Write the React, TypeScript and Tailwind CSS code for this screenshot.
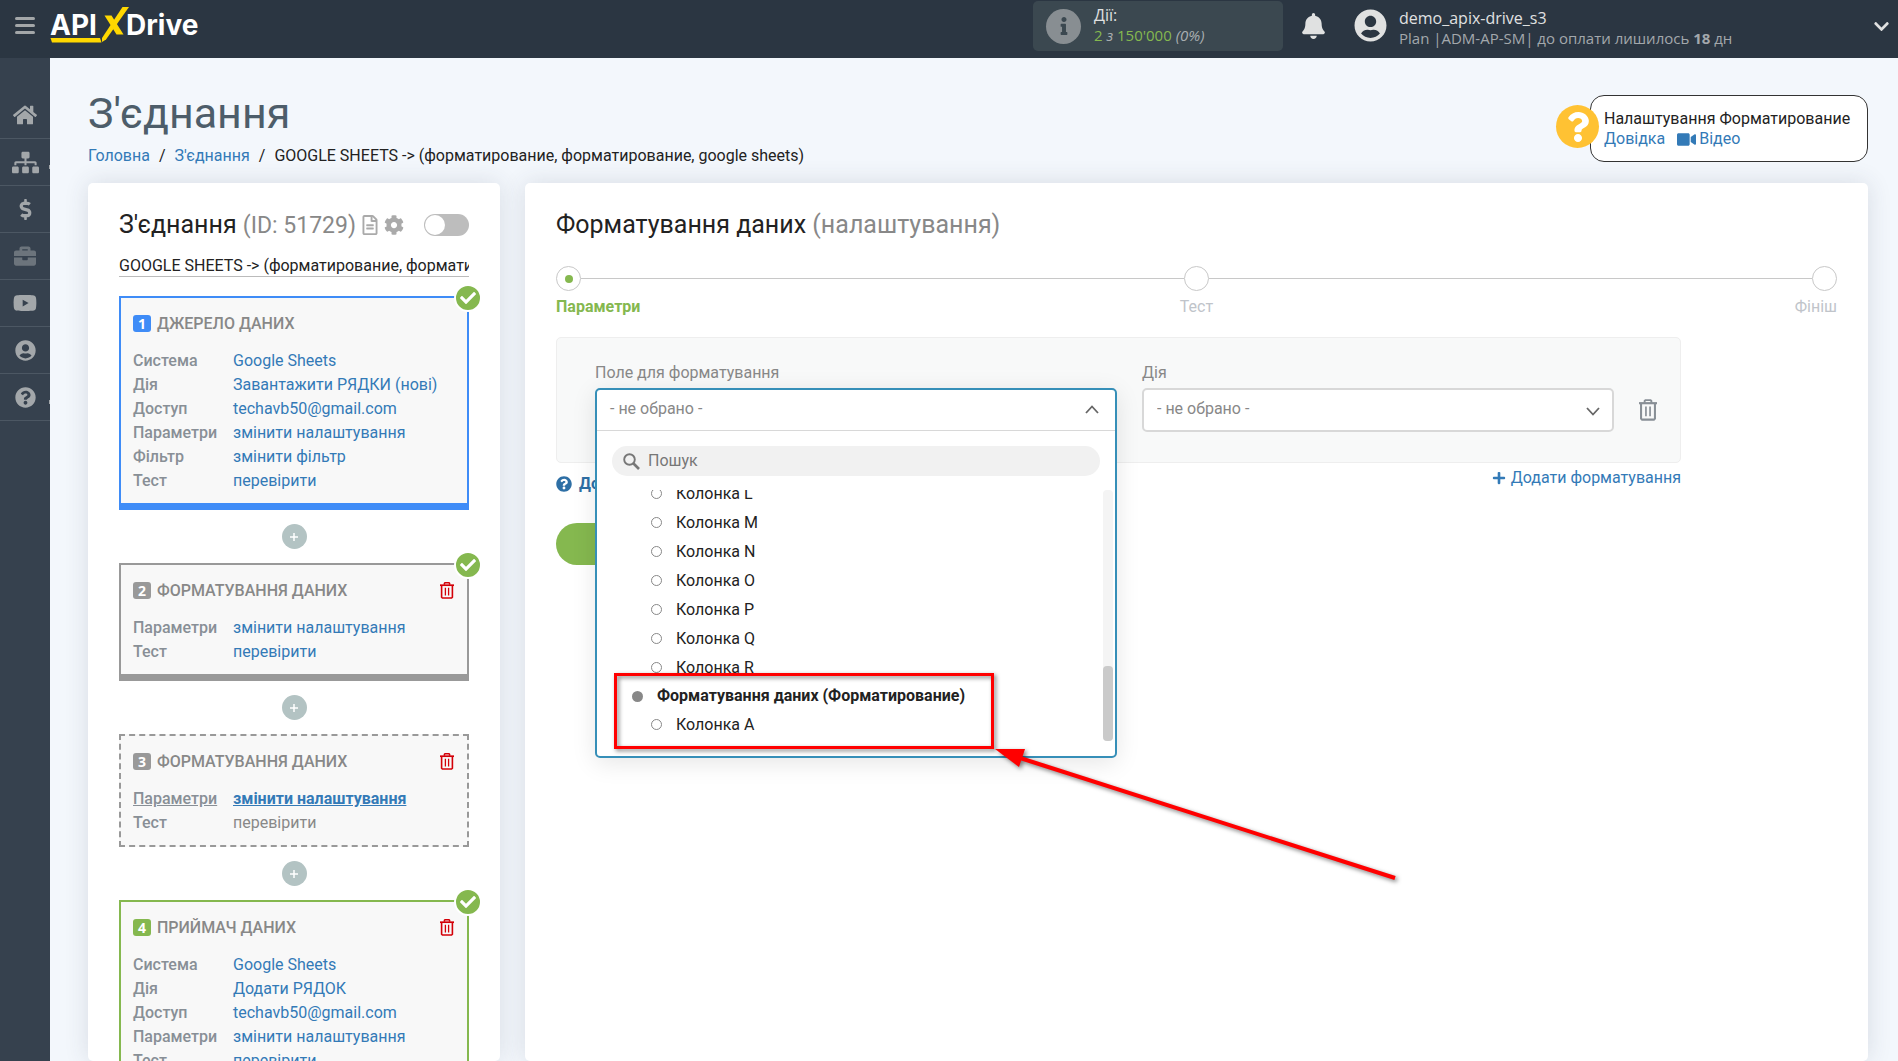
import React from "react";
import {
  FaBell,
  FaBriefcase,
  FaCheck,
  FaChevronDown,
  FaCog,
  FaDollarSign,
  FaHome,
  FaPlus,
  FaQuestion,
  FaQuestionCircle,
  FaRegFileAlt,
  FaSitemap,
  FaUserCircle,
  FaVideo,
  FaYoutube,
  FaInfo,
} from "react-icons/fa";

type Row = { label: string; value: string; state?: "active" | "muted" };

type Step = {
  number: number;
  title: string;
  box: string;
  badge: string;
  done: boolean;
  removable: boolean;
  rows: Row[];
};

const steps: Step[] = [
  {
    number: 1,
    title: "ДЖЕРЕЛО ДАНИХ",
    box: "border-2 border-b-[7px] border-[#3f8cf7]",
    badge: "bg-[#3f8cf7]",
    done: true,
    removable: false,
    rows: [
      { label: "Система", value: "Google Sheets" },
      { label: "Дія", value: "Завантажити РЯДКИ (нові)" },
      { label: "Доступ", value: "techavb50@gmail.com" },
      { label: "Параметри", value: "змінити налаштування" },
      { label: "Фільтр", value: "змінити фільтр" },
      { label: "Тест", value: "перевірити" },
    ],
  },
  {
    number: 2,
    title: "ФОРМАТУВАННЯ ДАНИХ",
    box: "border-2 border-b-[7px] border-[#999]",
    badge: "bg-[#999]",
    done: true,
    removable: true,
    rows: [
      { label: "Параметри", value: "змінити налаштування" },
      { label: "Тест", value: "перевірити" },
    ],
  },
  {
    number: 3,
    title: "ФОРМАТУВАННЯ ДАНИХ",
    box: "border-2 border-dashed border-[#999]",
    badge: "bg-[#999]",
    done: false,
    removable: true,
    rows: [
      { label: "Параметри", value: "змінити налаштування", state: "active" },
      { label: "Тест", value: "перевірити", state: "muted" },
    ],
  },
  {
    number: 4,
    title: "ПРИЙМАЧ ДАНИХ",
    box: "border-2 border-b-[7px] border-[#85b84f]",
    badge: "bg-[#85b84f]",
    done: true,
    removable: true,
    rows: [
      { label: "Система", value: "Google Sheets" },
      { label: "Дія", value: "Додати РЯДОК" },
      { label: "Доступ", value: "techavb50@gmail.com" },
      { label: "Параметри", value: "змінити налаштування" },
      { label: "Тест", value: "перевірити" },
    ],
  },
];

const columns = ["L", "M", "N", "O", "P", "Q", "R"];

const menu = [
  { name: "Головна", icon: <FaHome className="size-6" /> },
  { name: "З'єднання", icon: <FaSitemap className="size-[27px]" />, sub: true },
  { name: "Оплата", icon: <FaDollarSign className="size-[21px]" /> },
  { name: "Проєкти", icon: <FaBriefcase className="size-[22px] opacity-50" /> },
  { name: "Відео", icon: <FaYoutube className="size-6" /> },
  { name: "Профіль", icon: <FaUserCircle className="size-[21px]" /> },
  { name: "Допомога", icon: <FaQuestionCircle className="size-[21px]" />, sub: true },
];

function Trash({ className }: { className: string }) {
  return (
    <svg viewBox="0 0 14 17" className={className} fill="none" stroke="currentColor" aria-hidden="true">
      <path d="M0 3.2h14" strokeWidth="1.7" />
      <path d="M4.4 2.8V1.4l.6-.6h4l.6.6v1.4" strokeWidth="1.5" />
      <path d="M1.6 3.5v11.7l.8.8h9.2l.8-.8V3.5" strokeWidth="1.6" />
      <path d="M5.4 5.8v7.6M8.6 5.8v7.6" strokeWidth="1.3" />
    </svg>
  );
}

function Logo() {
  return (
    <a href="#" aria-label="APIXDrive" className="block">
      <svg viewBox="0 0 154 38" className="h-[38px] w-[154px]">
        <text x="0" y="28.5" fill="#fff" fontFamily="Inter, sans-serif" fontWeight="700" fontSize="28">
          API
        </text>
        <text x="76" y="28.5" fill="#fff" fontFamily="Inter, sans-serif" fontWeight="700" fontSize="28">
          Drive
        </text>
        <path d="M.5 32H50l1.500 4.500H2z" fill="#ffd800" />
        <path d="M72.500 1H79L56 33.500 52 36V32z" fill="#ffd800" />
        <path d="M54.500 9.500h7L73.500 28.500h-7z" fill="#ffd800" />
      </svg>
    </a>
  );
}

function Header() {
  return (
    <header className="flex h-[58px] shrink-0 items-start bg-[#2b3642] pr-2 font-['Open_Sans',sans-serif] text-[#e0e1e1]">
      <button aria-label="Меню" className="mt-[17px] ml-[15px] flex w-5 flex-col gap-[4px]">
        <span className="h-[3px] rounded-sm bg-[#a3a7a9]" />
        <span className="h-[3px] rounded-sm bg-[#a3a7a9]" />
        <span className="h-[3px] rounded-sm bg-[#a3a7a9]" />
      </button>
      <div className="mt-[6px] ml-[15px]">
        <Logo />
      </div>
      <div className="mt-px mr-[19px] ml-auto flex h-[50px] w-[250px] items-center gap-[13px] rounded-[5px] bg-[#3b4850] pl-[13px]">
        <span className="flex size-[35px] items-center justify-center rounded-full bg-[#888e92] text-[#3b4850]">
          <FaInfo className="size-[18px]" />
        </span>
        <div className="pb-0.5">
          <p className="text-base leading-5">Дії:</p>
          <p className="text-[15px] leading-5 text-[#a9aeb1]">
            <span className="text-[#85b84f]">2</span> <i>з</i> <span className="text-[#85b84f]">150'000</span> <i>(0%)</i>
          </p>
        </div>
      </div>
      <button aria-label="Сповіщення" className="mt-[13px]">
        <FaBell className="h-[26px] w-[23px]" />
      </button>
      <button className="flex items-start pl-[29px] text-left">
        <FaUserCircle className="mt-[9px] size-[33px]" />
        <span className="mt-2 ml-3 block w-[460px]">
          <span className="block text-base leading-5">demo_apix-drive_s3</span>
          <span className="block text-[15px] leading-5 text-[#a3a8ac]">
            Plan |ADM-AP-SM| до оплати лишилось <b>18</b> дн
          </span>
        </span>
        <FaChevronDown className="mt-[18px] ml-[14px] size-[17px]" />
      </button>
    </header>
  );
}

function Sidebar() {
  return (
    <nav className="w-[50px] shrink-0 bg-[#36414e] pt-[34px] text-[#a3a7aa]">
      {menu.map((m) => (
        <a
          key={m.name}
          href="#"
          aria-label={m.name}
          className="relative flex h-[47px] items-center justify-center border-b border-[#4c5763]"
        >
          {m.icon}
          {m.sub && <span className="absolute right-0 bottom-4 h-1 w-px bg-[#a3a7aa]" />}
        </a>
      ))}
    </nav>
  );
}

function StepBox({ step }: { step: Step }) {
  return (
    <section className={`relative bg-[#f8f8f8] px-3 pb-[10px] ${step.box}`}>
      {step.done && (
        <span className="absolute -top-[14px] -right-[15px] flex size-[28px] items-center justify-center rounded-full border-2 border-white bg-[#85b84f] text-white">
          <FaCheck className="size-4" />
        </span>
      )}
      <div className="flex h-[51px] items-center">
        <span
          className={`flex h-[17px] w-[18px] items-center justify-center rounded-[3px] font-['Open_Sans',sans-serif] text-sm font-bold text-white ${step.badge}`}
        >
          {step.number}
        </span>
        <h3 className="ml-1.5 font-medium text-[#888]">{step.title}</h3>
        {step.removable && (
          <button aria-label="Видалити" className="mr-px ml-auto text-[#d30008]">
            <Trash className="h-[17px] w-[14px]" />
          </button>
        )}
      </div>
      <dl className="grid grid-cols-[100px_1fr] leading-6">
        {step.rows.map((r) => (
          <React.Fragment key={r.label}>
            <dt
              className={
                r.state === "active" ? "font-medium text-[#888f96] underline" : "font-medium text-[#888f96]"
              }
            >
              {r.label}
            </dt>
            <dd className="whitespace-nowrap">
              <a
                href="#"
                className={
                  r.state === "active"
                    ? "font-bold text-[#337ab7] underline"
                    : r.state === "muted"
                      ? "text-[#888]"
                      : "text-[#337ab7]"
                }
              >
                {r.value}
              </a>
            </dd>
          </React.Fragment>
        ))}
      </dl>
    </section>
  );
}

function ConnectionCard() {
  return (
    <aside className="w-[412px] shrink-0 rounded-[5px] bg-white px-[31px] pt-[26px] shadow-[0_0_25px_rgba(50,60,80,0.14)]">
      <div className="flex h-8 items-center">
        <h2 className="text-[25px] leading-8 whitespace-nowrap text-[#222]">
          З'єднання <span className="text-[23px] text-[#888]">(ID: 51729)</span>
        </h2>
        <button aria-label="Журнал" className="ml-[6px] text-[#aaa]">
          <FaRegFileAlt className="h-5 w-4" />
        </button>
        <button aria-label="Налаштування" className="ml-[6px] text-[#aaa]">
          <FaCog className="size-5" />
        </button>
        <input
          type="checkbox"
          aria-label="Увімкнути"
          className="ml-auto h-[22px] w-[45px] appearance-none rounded-full bg-[#bdbdbd] p-px before:block before:size-5 before:rounded-full before:bg-white"
        />
      </div>
      <input
        type="text"
        aria-label="Назва з'єднання"
        readOnly
        value="GOOGLE SHEETS -> (форматирование, форматирование, google sheets)"
        className="mt-[14px] block h-[22px] w-full border-b border-[#bbb] text-[#222] outline-none"
      />
      <div className="mt-[19px]">
        {steps.map((s, i) => (
          <React.Fragment key={s.number}>
            {i > 0 && (
              <button
                aria-label="Додати блок"
                className="mx-auto my-[14px] flex size-[25px] items-center justify-center rounded-full bg-[#b3c3c3] text-white"
              >
                <svg viewBox="0 0 10 10" className="size-2.5" stroke="currentColor" strokeWidth="1.5" aria-hidden="true">
                  <path d="M5 1v8M1 5h8" />
                </svg>
              </button>
            )}
            <StepBox step={s} />
          </React.Fragment>
        ))}
      </div>
    </aside>
  );
}

function Stepper() {
  const dot = "flex size-[25px] items-center justify-center rounded-full border border-[#c8c8c8]";
  return (
    <div>
      <div className="flex items-center">
        <span className={dot}>
          <span className="size-2 rounded-full bg-[#85b84f]" />
        </span>
        <span className="h-px flex-1 bg-[#c8c8c8]" />
        <span className={dot} />
        <span className="h-px flex-1 bg-[#c8c8c8]" />
        <span className={dot} />
      </div>
      <div className="mt-1 grid grid-cols-3 leading-6 text-[#c0c4ca]">
        <span className="font-bold text-[#85b84f]">Параметри</span>
        <span className="text-center">Тест</span>
        <span className="text-right">Фініш</span>
      </div>
    </div>
  );
}

function Option({ children }: { children: React.ReactNode }) {
  return (
    <li role="option" aria-selected="false" className="flex h-[29px] shrink-0 items-center pl-[54px]">
      <span className="size-[11px] rounded-full border border-[#888]" />
      <span className="ml-[14px]">{children}</span>
    </li>
  );
}

function FieldDropdown() {
  return (
    <div className="absolute inset-x-0 top-0 z-10 rounded-[5px] border-2 border-[#368fb8] bg-white shadow-[0_5px_25px_rgba(0,0,0,0.1)]">
      <button
        id="field"
        aria-expanded="true"
        className="flex h-[41px] w-full items-center justify-between border-b border-[#d8d8d8] pr-4 pb-0.5 pl-[13px] text-[#888]"
      >
        - не обрано -
        <svg viewBox="0 0 14 9" className="h-[9px] w-[14px]" fill="none" stroke="#666" strokeWidth="1.8" aria-hidden="true">
          <path d="M1 8l6-6.500L13 8" />
        </svg>
      </button>
      <label className="mx-[15px] mt-[15px] flex h-[30px] items-center gap-2 rounded-full bg-[#f1f1f1] pl-[11px]">
        <svg viewBox="0 0 17 17" className="size-[17px]" fill="none" stroke="#777" aria-hidden="true">
          <circle cx="6.500" cy="6.500" r="5.300" strokeWidth="1.900" />
          <path d="M10.500 10.500l5.500 5.500" strokeWidth="2.600" />
        </svg>
        <input
          type="text"
          aria-label="Пошук"
          placeholder="Пошук"
          className="min-w-0 flex-1 bg-transparent outline-none placeholder:text-[#777]"
        />
      </label>
      <div className="mt-[14px] mb-[15px] flex h-[251px]">
        <ul
          role="listbox"
          aria-label="Поле для форматування"
          className="flex flex-1 flex-col justify-end overflow-hidden pb-[2px] text-[#222]"
        >
          {columns.map((c) => (
            <Option key={c}>Колонка {c}</Option>
          ))}
          <li className="flex h-[28px] shrink-0 items-center pl-[35px] font-bold">
            <span className="size-[11px] rounded-full bg-[#888]" />
            <span className="ml-[14px]">Форматування даних (Форматирование)</span>
          </li>
          <Option>Колонка A</Option>
        </ul>
        <div className="mr-0.5 flex w-[10px] flex-col justify-end rounded-sm bg-[#f4f4f4]">
          <div className="h-[75px] rounded-sm bg-[#cacaca]" />
        </div>
      </div>
      {/* highlight frame and pointer over the list */}
      <div className="absolute top-[283px] left-[17px] h-[76px] w-[380px] border-3 border-[#f00] drop-shadow-[2px_2px_2px_rgba(0,0,0,0.5)]" />
      <svg
        viewBox="0 0 404 134"
        className="absolute top-[359px] left-[398px] h-[134px] w-[404px] overflow-visible drop-shadow-[2px_2px_2px_rgba(0,0,0,0.5)]"
        fill="#f00"
        aria-hidden="true"
      >
        <path d="M0 0h30l-6 18z" />
        <path d="M22 8l378 121" stroke="#f00" strokeWidth="4" />
      </svg>
    </div>
  );
}

function SettingsCard() {
  return (
    <main className="min-w-0 flex-1 rounded-[5px] bg-white px-[31px] pt-[26px] shadow-[0_0_25px_rgba(50,60,80,0.14)]">
      <h2 className="mb-[25px] text-[25px] leading-8 text-[#222]">
        Форматування даних <span className="text-[#888]">(налаштування)</span>
      </h2>
      <Stepper />
      <div className="mr-[156px]">
        <div className="mt-[18px] flex h-[126px] items-start gap-[25px] rounded-[5px] border border-[#eee] bg-[#f8f9f9] pt-6 pr-[23px] pl-[38px]">
          <div className="min-w-0 flex-[522]">
            <label htmlFor="field" className="block h-[26px] leading-[22px] text-[#888]">
              Поле для форматування
            </label>
            <div className="relative h-11">
              <FieldDropdown />
            </div>
          </div>
          <div className="min-w-0 flex-[472]">
            <label htmlFor="action" className="block h-[26px] leading-[22px] text-[#888]">
              Дія
            </label>
            <div className="relative">
              <select
                id="action"
                className="block h-11 w-full appearance-none rounded-[5px] border-2 border-[#d8d8d8] bg-white pb-0.5 pl-[13px] text-[#888]"
              >
                <option>- не обрано -</option>
              </select>
              <svg
                viewBox="0 0 14 9"
                className="pointer-events-none absolute top-[19px] right-[14px] h-[9px] w-[14px]"
                fill="none"
                stroke="#666"
                strokeWidth="1.8"
                aria-hidden="true"
              >
                <path d="M1 1l6 6.500L13 1" />
              </svg>
            </div>
          </div>
          <button aria-label="Видалити форматування" className="mt-[37px] text-[#888f96]">
            <Trash className="h-[22px] w-[18px]" />
          </button>
        </div>
        <div className="flex justify-between pt-[3px] text-[#337ab7]">
          <a href="#" className="mt-[6px] flex items-center gap-[7px] leading-6 font-bold text-[#2e6fa5]">
            <FaQuestionCircle className="size-4" />
            Довідка
          </a>
          <a href="#" className="flex items-center gap-[5px] self-start leading-6">
            <FaPlus className="size-[14px]" />
            Додати форматування
          </a>
        </div>
        <button className="mt-[27px] h-[42px] w-[230px] rounded-full bg-[#85b84f] text-center text-white">Далі</button>
      </div>
    </main>
  );
}

export default function App() {
  return (
    <div className="flex h-screen flex-col overflow-hidden bg-[#f3f7fc] font-[Roboto,sans-serif] text-base text-[#222]">
      <Header />
      <div className="flex min-h-0 flex-1">
        <Sidebar />
        <div className="flex min-w-0 flex-1 flex-col pr-[30px] pl-[38px]">
          <div className="flex h-[125px] shrink-0 items-start justify-between">
            <div>
              <h1 className="mt-[29px] text-[43px] leading-[52px] text-[#4d5d6a]">З'єднання</h1>
              <nav className="mt-[5px] flex gap-[9px] leading-6">
                <a href="#" className="text-[#337ab7]">
                  Головна
                </a>
                <span>/</span>
                <a href="#" className="text-[#337ab7]">
                  З'єднання
                </a>
                <span>/</span>
                <span>{"GOOGLE SHEETS -> (форматирование, форматирование, google sheets)"}</span>
              </nav>
            </div>
            <div className="relative mt-[37px] h-[67px] w-[278px] rounded-[14px] border border-[#333] bg-white px-[13px] py-[13px] leading-5">
              <span className="absolute top-[9px] -left-[35px] flex size-[43px] items-center justify-center rounded-full bg-[#ffc233] text-white">
                <FaQuestion className="size-[30px]" />
              </span>
              <p>Налаштування Форматирование</p>
              <p className="flex gap-[12px] text-[#337ab7]">
                <a href="#">Довідка</a>
                <a href="#" className="flex items-center gap-[3px]">
                  <FaVideo className="size-[19px]" />
                  Відео
                </a>
              </p>
            </div>
          </div>
          <div className="flex min-h-0 flex-1 gap-[25px]">
            <ConnectionCard />
            <SettingsCard />
          </div>
        </div>
      </div>
    </div>
  );
}
